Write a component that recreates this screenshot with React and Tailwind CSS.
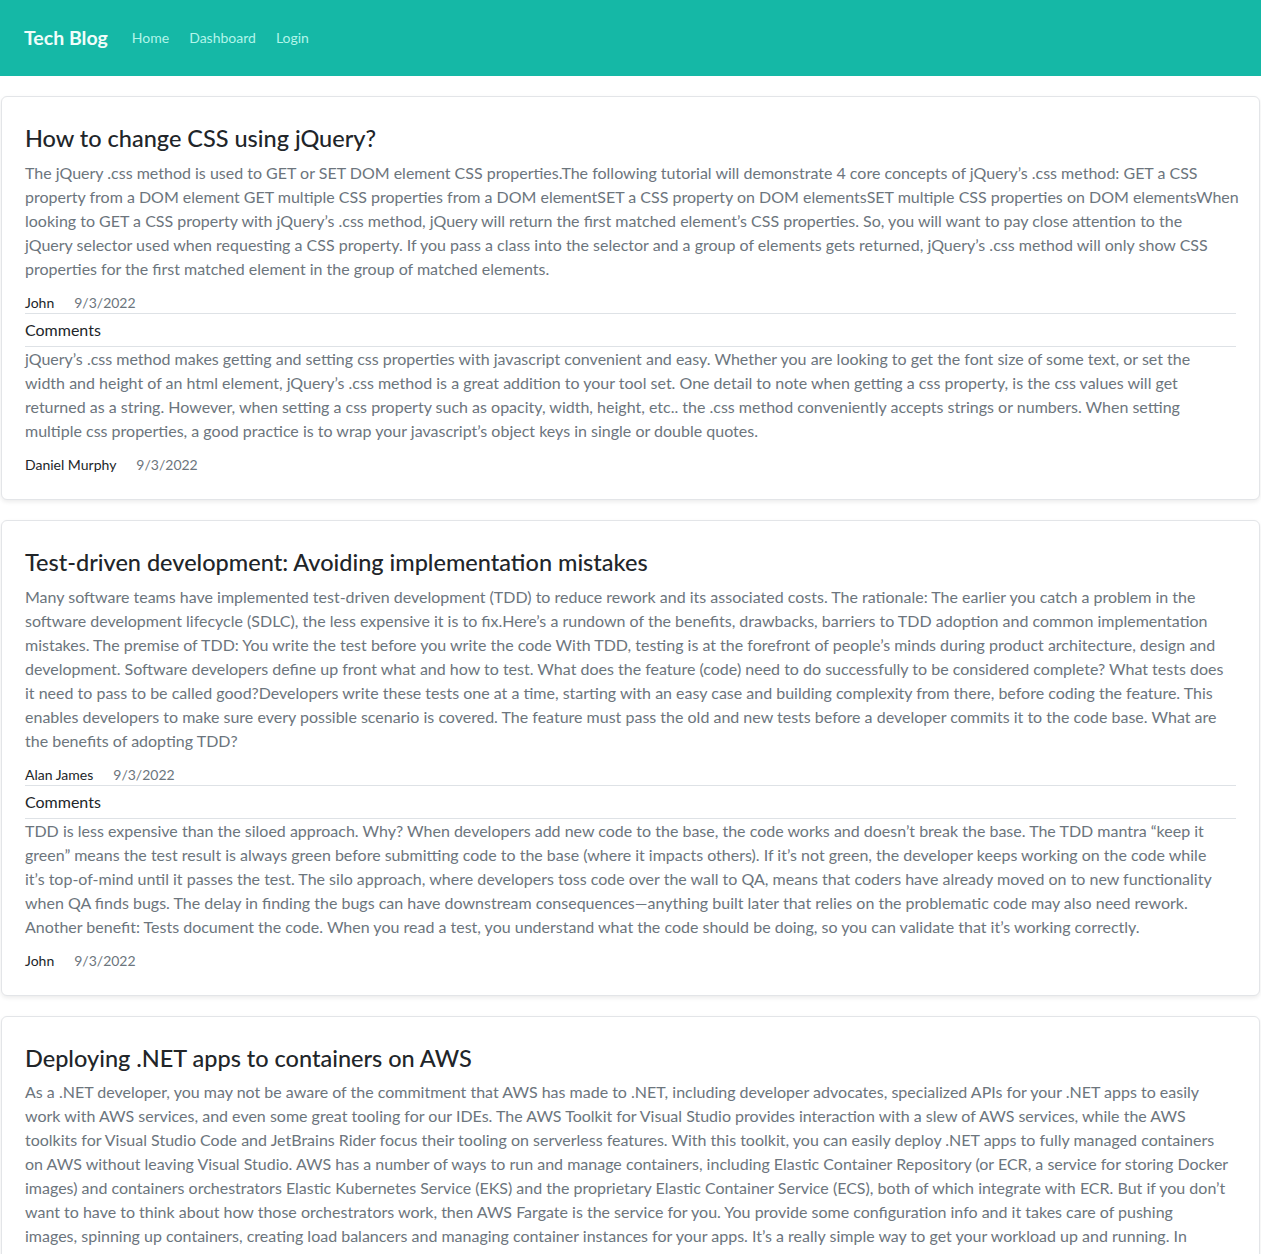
import React from "react";

const posts = [
  {
    title: "How to change CSS using jQuery?",
    body: [
      "The jQuery .css method is used to GET or SET DOM element CSS properties.The following tutorial will demonstrate 4 core concepts of jQuery\u2019s .css method: GET a CSS",
      "property from a DOM element GET multiple CSS properties from a DOM elementSET a CSS property on DOM elementsSET multiple CSS properties on DOM elementsWhen",
      "looking to GET a CSS property with jQuery\u2019s .css method, jQuery will return the first matched element\u2019s CSS properties. So, you will want to pay close attention to the",
      "jQuery selector used when requesting a CSS property. If you pass a class into the selector and a group of elements gets returned, jQuery\u2019s .css method will only show CSS",
      "properties for the first matched element in the group of matched elements.",
    ],
    author: "John",
    date: "9/3/2022",
    comments: [
      {
        text: [
          "jQuery\u2019s .css method makes getting and setting css properties with javascript convenient and easy. Whether you are looking to get the font size of some text, or set the",
          "width and height of an html element, jQuery\u2019s .css method is a great addition to your tool set. One detail to note when getting a css property, is the css values will get",
          "returned as a string. However, when setting a css property such as opacity, width, height, etc.. the .css method conveniently accepts strings or numbers. When setting",
          "multiple css properties, a good practice is to wrap your javascript\u2019s object keys in single or double quotes.",
        ],
        author: "Daniel Murphy",
        date: "9/3/2022",
      },
    ],
  },
  {
    title: "Test-driven development: Avoiding implementation mistakes",
    body: [
      "Many software teams have implemented test-driven development (TDD) to reduce rework and its associated costs. The rationale: The earlier you catch a problem in the",
      "software development lifecycle (SDLC), the less expensive it is to fix.Here\u2019s a rundown of the benefits, drawbacks, barriers to TDD adoption and common implementation",
      "mistakes. The premise of TDD: You write the test before you write the code With TDD, testing is at the forefront of people\u2019s minds during product architecture, design and",
      "development. Software developers define up front what and how to test. What does the feature (code) need to do successfully to be considered complete? What tests does",
      "it need to pass to be called good?Developers write these tests one at a time, starting with an easy case and building complexity from there, before coding the feature. This",
      "enables developers to make sure every possible scenario is covered. The feature must pass the old and new tests before a developer commits it to the code base. What are",
      "the benefits of adopting TDD?",
    ],
    author: "Alan James",
    date: "9/3/2022",
    comments: [
      {
        text: [
          "TDD is less expensive than the siloed approach. Why? When developers add new code to the base, the code works and doesn\u2019t break the base. The TDD mantra \u201ckeep it",
          "green\u201d means the test result is always green before submitting code to the base (where it impacts others). If it\u2019s not green, the developer keeps working on the code while",
          "it\u2019s top-of-mind until it passes the test. The silo approach, where developers toss code over the wall to QA, means that coders have already moved on to new functionality",
          "when QA finds bugs. The delay in finding the bugs can have downstream consequences\u2014anything built later that relies on the problematic code may also need rework.",
          "Another benefit: Tests document the code. When you read a test, you understand what the code should be doing, so you can validate that it\u2019s working correctly.",
        ],
        author: "John",
        date: "9/3/2022",
      },
    ],
  },
  {
    title: "Deploying .NET apps to containers on AWS",
    body: [
      "As a .NET developer, you may not be aware of the commitment that AWS has made to .NET, including developer advocates, specialized APIs for your .NET apps to easily",
      "work with AWS services, and even some great tooling for our IDEs. The AWS Toolkit for Visual Studio provides interaction with a slew of AWS services, while the AWS",
      "toolkits for Visual Studio Code and JetBrains Rider focus their tooling on serverless features. With this toolkit, you can easily deploy .NET apps to fully managed containers",
      "on AWS without leaving Visual Studio. AWS has a number of ways to run and manage containers, including Elastic Container Repository (or ECR, a service for storing Docker",
      "images) and containers orchestrators Elastic Kubernetes Service (EKS) and the proprietary Elastic Container Service (ECS), both of which integrate with ECR. But if you don\u2019t",
      "want to have to think about how those orchestrators work, then AWS Fargate is the service for you. You provide some configuration info and it takes care of pushing",
      "images, spinning up containers, creating load balancers and managing container instances for your apps. It\u2019s a really simple way to get your workload up and running. In",
      "this article, we will walk through deploying a .NET application to AWS Fargate.",
    ],
    author: "Daniel Murphy",
    date: "9/3/2022",
    comments: [],
  },
];

function Lines({ lines }) {
  return (
    <p className="mb-3 text-base leading-6 text-[#6c757d]">
      {lines.map((l, i) => (
        <span key={i} className="block whitespace-nowrap">
          {l}
        </span>
      ))}
    </p>
  );
}

function Meta({ author, date, border }) {
  return (
    <div
      className={
        "flex gap-5 text-sm leading-5 " +
        (border ? "border-b border-[#dee2e6]" : "")
      }
    >
      <span className="text-[#212529]">{author}</span>
      <span className="text-[#6c757d]">{date}</span>
    </div>
  );
}

function Card({ post }) {
  return (
    <div className="mx-px mt-5 rounded-md border border-[#e3e5e8] bg-white px-[23px] pt-[27px] pb-6 shadow-[0_2px_4px_rgba(0,0,0,0.08)]">
      <h2 className="mb-2 text-[23.5px] leading-[28.8px] font-medium text-[#212529]">
        {post.title}
      </h2>
      <Lines lines={post.body} />
      <Meta author={post.author} date={post.date} border />
      <div className="border-b border-[#dee2e6] py-1 text-base leading-6 text-[#212529]">
        Comments
      </div>
      {post.comments.map((c, i) => (
        <div key={i}>
          <Lines lines={c.text} />
          <Meta author={c.author} date={c.date} />
        </div>
      ))}
    </div>
  );
}

export default function App() {
  return (
    <div className="min-h-screen bg-white font-['Lato',sans-serif]">
      <nav className="flex h-[76px] items-center bg-[#15b8a6] px-6">
        <a className="mr-6 text-[19.5px] font-bold text-[#f0fdfa]" href="#">
          Tech Blog
        </a>
        <div className="flex gap-5 text-sm text-[#b2f5ea]">
          <a href="#">Home</a>
          <a href="#">Dashboard</a>
          <a href="#">Login</a>
        </div>
      </nav>
      <main className="pb-5">
        {posts.map((p, i) => (
          <Card key={i} post={p} />
        ))}
      </main>
    </div>
  );
}
